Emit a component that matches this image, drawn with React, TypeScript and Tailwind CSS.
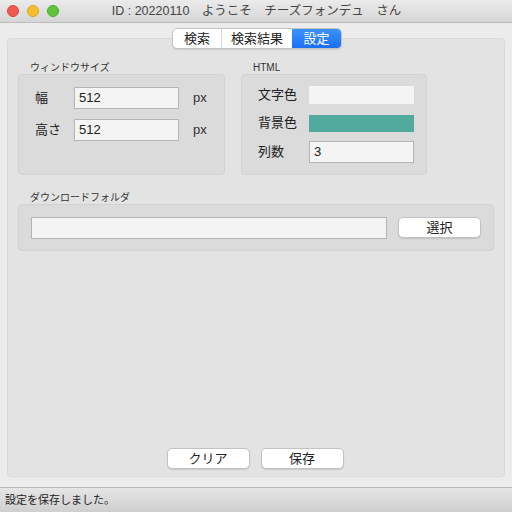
import React from "react";

const FONT = { fontFamily: '"Liberation Sans", "Noto Sans CJK JP", sans-serif' };

function Field({ value, w = "w-[105px]" }: { value?: string; w?: string }) {
  return (
    <div
      className={`${w} h-[22px] bg-[#f4f4f4] border border-[#b5b5b5] flex items-center px-[4px] text-[13px] text-[#222]`}
    >
      {value}
    </div>
  );
}

function Button({ label, w = "w-[83px]" }: { label: string; w?: string }) {
  return (
    <div
      className={`${w} h-[21px] bg-white border border-[#c2c2c2] rounded-[5px] shadow-[0_1px_1px_rgba(0,0,0,0.12)] flex items-center justify-center text-[13px] text-[#222]`}
    >
      {label}
    </div>
  );
}

function Group({ title, className, children }: { title: string; className?: string; children: React.ReactNode }) {
  return (
    <div className={`flex flex-col ${className ?? ""}`}>
      <div className="h-[13px] pl-[12px] text-[10px] leading-[13px] font-normal text-[#333]">{title}</div>
      <div className="bg-[#dbdbdb] border border-[#d2d2d2] rounded-[4px]">{children}</div>
    </div>
  );
}

export default function App() {
  return (
    <div className="w-[512px] h-[512px] flex flex-col bg-[#ececec] overflow-hidden" style={FONT}>
      {/* title bar */}
      <div className="h-[23px] shrink-0 relative flex items-center justify-center bg-gradient-to-b from-[#ebebeb] to-[#d6d6d6] border-b border-[#bdbdbd]">
        <div className="absolute left-[7px] top-[5px] flex gap-[8px]">
          <div className="w-[12px] h-[12px] rounded-full bg-[#ee5a52] border border-[#d9463e]" />
          <div className="w-[12px] h-[12px] rounded-full bg-[#f5bd2f] border border-[#dea225]" />
          <div className="w-[12px] h-[12px] rounded-full bg-[#5ec43e] border border-[#48a92d]" />
        </div>
        <div className="text-[12.5px] text-[#444] whitespace-pre pl-[1px]">ID : 20220110　ようこそ　チーズフォンデュ　さん</div>
      </div>

      {/* main */}
      <div className="flex-1 relative px-[7px] pt-[15px] pb-[10px] flex flex-col">
        {/* segmented tabs */}
        <div className="absolute left-[172px] top-[5px] h-[21px] flex rounded-[5px] border border-[#c4c4c4] bg-white overflow-hidden shadow-[0_1px_1px_rgba(0,0,0,0.1)] text-[13px] z-10">
          <div className="w-[49px] flex items-center justify-center text-[#222] border-r border-[#d6d6d6]">検索</div>
          <div className="w-[70px] flex items-center justify-center text-[#222]">検索結果</div>
          <div className="w-[49px] flex items-center justify-center text-white bg-gradient-to-b from-[#3d93fb] to-[#1a6ff5]">設定</div>
        </div>

        <div className="flex-1 bg-[#e3e3e3] border border-[#d9d9d9] rounded-[4px] px-[10px] pt-[22px] pb-[7px] flex flex-col">
          <div className="flex gap-[16px]">
            <Group title="ウィンドウサイズ" className="w-[207px]">
              <div className="h-[99px] pt-[12px] pl-[16px] flex flex-col gap-[10px]">
                <div className="flex items-center">
                  <div className="w-[39px] text-[13px] text-[#222]">幅</div>
                  <Field value="512" />
                  <div className="ml-[14px] text-[13px] text-[#333]">px</div>
                </div>
                <div className="flex items-center">
                  <div className="w-[39px] text-[13px] text-[#222]">高さ</div>
                  <Field value="512" />
                  <div className="ml-[14px] text-[13px] text-[#333]">px</div>
                </div>
              </div>
            </Group>
            <Group title="HTML" className="w-[186px]">
              <div className="h-[99px] pt-[11px] pl-[16px] flex flex-col">
                <div className="flex items-center h-[18px]">
                  <div className="w-[51px] text-[13px] text-[#222]">文字色</div>
                  <div className="w-[105px] h-[18px] bg-[#f4f4f4]" />
                </div>
                <div className="flex items-center h-[18px] mt-[10px]">
                  <div className="w-[51px] text-[13px] text-[#222]">背景色</div>
                  <div className="w-[105px] h-[17px] bg-[#52aa9e]" />
                </div>
                <div className="flex items-center mt-[9px]">
                  <div className="w-[51px] text-[13px] text-[#222]">列数</div>
                  <Field value="3" />
                </div>
              </div>
            </Group>
          </div>

          <Group title="ダウンロードフォルダ" className="mt-[16px]">
            <div className="h-[45px] pl-[12px] pr-[12px] flex items-center gap-[11px]">
              <Field w="w-[356px]" />
              <Button label="選択" />
            </div>
          </Group>

          <div className="flex-1" />
          <div className="flex justify-center gap-[11px] pr-[2px]">
            <Button label="クリア" />
            <Button label="保存" />
          </div>
        </div>
      </div>

      {/* status bar */}
      <div className="h-[25px] shrink-0 flex items-center pl-[5px] bg-gradient-to-b from-[#e6e6e6] to-[#cfcfcf] border-t border-[#b8b8b8] text-[11px] text-[#222]">
        設定を保存しました。
      </div>
    </div>
  );
}
